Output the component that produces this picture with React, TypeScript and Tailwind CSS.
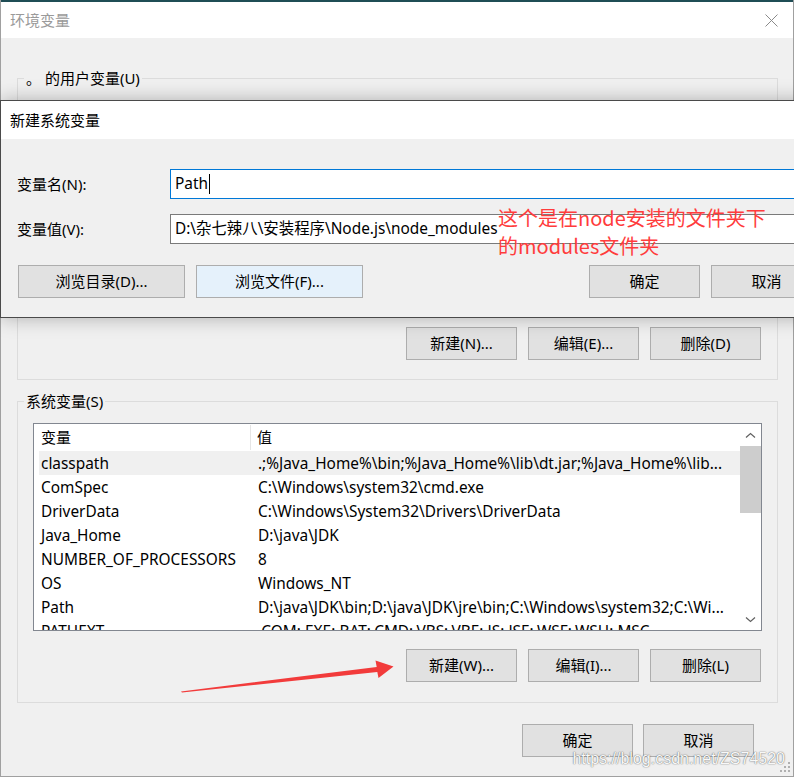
import React from "react";

const rows: [string, string][] = [
  ["classpath", ".;%Java_Home%\\bin;%Java_Home%\\lib\\dt.jar;%Java_Home%\\lib..."],
  ["ComSpec", "C:\\Windows\\system32\\cmd.exe"],
  ["DriverData", "C:\\Windows\\System32\\Drivers\\DriverData"],
  ["Java_Home", "D:\\java\\JDK"],
  ["NUMBER_OF_PROCESSORS", "8"],
  ["OS", "Windows_NT"],
  ["Path", "D:\\java\\JDK\\bin;D:\\java\\JDK\\jre\\bin;C:\\Windows\\system32;C:\\Wi..."],
  ["PATHEXT", ".COM;.EXE;.BAT;.CMD;.VBS;.VBE;.JS;.JSE;.WSF;.WSH;.MSC"],
];

function Btn({ children, className = "" }: { children: React.ReactNode; className?: string }) {
  return (
    <div
      className={`flex h-[33px] shrink-0 items-center justify-center border border-[#adadad] bg-[#e1e1e1] ${className}`}
    >
      {children}
    </div>
  );
}

function Group({
  legend,
  className = "",
  children,
}: {
  legend: React.ReactNode;
  className?: string;
  children?: React.ReactNode;
}) {
  return (
    <div className={`relative border border-[#dcdcdc] ${className}`}>
      <span className="absolute left-[6px] top-[-11px] bg-[#f0f0f0] px-[2px] leading-[20px] whitespace-pre">
        {legend}
      </span>
      {children}
    </div>
  );
}

function Chevron({ down = false }: { down?: boolean }) {
  return (
    <svg width="11" height="7" viewBox="0 0 11 7">
      <path
        d={down ? "M1 1.5 L5.5 5.5 L10 1.5" : "M1 5.5 L5.5 1.5 L10 5.5"}
        fill="none"
        stroke="#606060"
        strokeWidth="1.2"
      />
    </svg>
  );
}

export default function App() {
  return (
    <div className="relative h-[777px] w-[794px] overflow-hidden bg-[#f0f0f0] text-[15px] text-black font-['Noto_Sans','Noto_Sans_CJK_SC',sans-serif]">
      {/* Outer window */}
      <div className="flex h-full flex-col border-x border-b border-[#a0a0a0]">
        <div className="h-[2px] bg-[#1f4d55]" />
        <div className="flex h-[36px] items-center justify-between bg-white pl-[9px] pr-[15px]">
          <span className="text-[#9a9a9a]">环境变量</span>
          <svg width="13" height="13" viewBox="0 0 13 13">
            <path d="M0.5 0.5 L12.5 12.5 M12.5 0.5 L0.5 12.5" stroke="#8a8a8a" strokeWidth="1" />
          </svg>
        </div>

        <div className="flex flex-col pl-[16px] pr-[15px]">
          <Group
            legend={"。 的用户变量(U)"}
            className="mt-[40px] flex h-[302px] flex-col justify-end px-[15px] pb-[19px]"
          >
            <div className="flex justify-end gap-[11px] pr-[1px]">
              <Btn className="w-[111px]">新建(N)...</Btn>
              <Btn className="w-[111px]">编辑(E)...</Btn>
              <Btn className="w-[111px]">删除(D)</Btn>
            </div>
          </Group>

          <Group legend="系统变量(S)" className="mt-[21px] flex h-[302px] flex-col px-[15px] pb-[20px] pt-[21px]">
            <div className="flex h-[208px] border border-[#828790] bg-white">
              <div className="flex min-w-0 flex-1 flex-col overflow-hidden">
                <div className="flex h-[27px] shrink-0 items-center">
                  <div className="flex h-[25px] w-[217px] shrink-0 items-center border-r border-[#e5e5e5] pl-[7px]">
                    变量
                  </div>
                  <div className="pl-[6px]">值</div>
                </div>
                {rows.map(([k, v], i) => (
                  <div
                    key={k}
                    className={`ml-[5px] flex h-[24px] shrink-0 items-center whitespace-nowrap pt-[2px] text-[15.4px] ${
                      i === 0 ? "bg-[#f0f0f0]" : ""
                    }`}
                  >
                    <div className="w-[219px] shrink-0 overflow-hidden pl-[2px]">{k}</div>
                    <div className="min-w-0 flex-1 overflow-hidden">{v}</div>
                  </div>
                ))}
              </div>
              <div className="flex w-[21px] shrink-0 flex-col bg-white">
                <div className="flex h-[22px] items-center justify-center">
                  <Chevron />
                </div>
                <div className="h-[67px] bg-[#cdcdcd]" />
                <div className="flex-1" />
                <div className="flex h-[22px] items-center justify-center">
                  <Chevron down />
                </div>
              </div>
            </div>
            <div className="mt-[18px] flex justify-end gap-[11px] pr-[1px]">
              <Btn className="w-[111px]">新建(W)...</Btn>
              <Btn className="w-[111px]">编辑(I)...</Btn>
              <Btn className="w-[111px]">删除(L)</Btn>
            </div>
          </Group>

          <div className="mt-[21px] flex justify-end gap-[10px] pr-[24px]">
            <Btn className="w-[111px]">确定</Btn>
            <Btn className="w-[111px]">取消</Btn>
          </div>
        </div>
      </div>

      {/* Inner dialog: 新建系统变量 */}
      <div className="absolute left-0 top-[100px] w-[840px] border border-[#4a4a4a] bg-[#f0f0f0] shadow-[0_0_18px_rgba(0,0,0,0.28)]">
        <div className="flex h-[38px] items-center bg-white pl-[9px]">新建系统变量</div>
        <div className="flex flex-col px-[16px] pb-[19px] pt-[30px]">
          <div className="flex items-center">
            <div className="w-[153px] shrink-0">变量名(N):</div>
            <div className="flex h-[30px] flex-1 items-center border border-[#0078d7] bg-white pl-[4px] text-[15.4px]">
              Path
              <span className="ml-[1px] inline-block h-[20px] w-[1px] bg-black" />
            </div>
          </div>
          <div className="mt-[15px] flex items-center">
            <div className="w-[153px] shrink-0">变量值(V):</div>
            <div className="flex h-[30px] flex-1 items-center whitespace-nowrap border border-[#7a7a7a] bg-white pl-[4px] text-[15.4px]">
              D:\杂七辣八\安装程序\Node.js\node_modules
            </div>
          </div>
          <div className="ml-[1px] mt-[21px] flex items-center">
            <Btn className="w-[167px]">浏览目录(D)...</Btn>
            <Btn className="ml-[11px] w-[167px] border-[#0078d7] bg-[#e5f1fb]">浏览文件(F)...</Btn>
            <Btn className="ml-[226px] w-[111px]">确定</Btn>
            <Btn className="ml-[11px] w-[111px]">取消</Btn>
          </div>
        </div>
      </div>

      {/* Red annotation */}
      <div className="absolute left-[498px] top-[204px] text-[20px] leading-[28px] text-[#ff3c3c] font-['Noto_Sans_CJK_SC',sans-serif]">
        <div>这个是在node安装的文件夹下</div>
        <div>的modules文件夹</div>
      </div>

      {/* Red arrow */}
      <svg className="pointer-events-none absolute left-0 top-0" width="794" height="777">
        <polygon
          points="181,691.5 376.7,667 375.5,660.5 393.5,666.5 378.5,678 377.3,672 182,692.5"
          fill="#f23b3b"
        />
      </svg>

      {/* Watermark */}
      <div className="absolute bottom-[8px] right-[9px] text-[16px] leading-[20px] text-[#f8f8f8] [text-shadow:0_0_1px_rgba(0,0,0,0.6),0_0_2px_rgba(0,0,0,0.25)] font-['Liberation_Sans',sans-serif]">
        https://blog.csdn.net/ZS74520
      </div>

      {/* Resize grip */}
      <svg className="absolute bottom-[4px] right-[3px]" width="12" height="12" viewBox="0 0 12 12">
        <rect x="9" y="1" width="2" height="2" fill="#b0b0b0" />
        <rect x="5" y="5" width="2" height="2" fill="#b0b0b0" />
        <rect x="9" y="5" width="2" height="2" fill="#b0b0b0" />
        <rect x="1" y="9" width="2" height="2" fill="#b0b0b0" />
        <rect x="5" y="9" width="2" height="2" fill="#b0b0b0" />
        <rect x="9" y="9" width="2" height="2" fill="#b0b0b0" />
      </svg>
    </div>
  );
}
